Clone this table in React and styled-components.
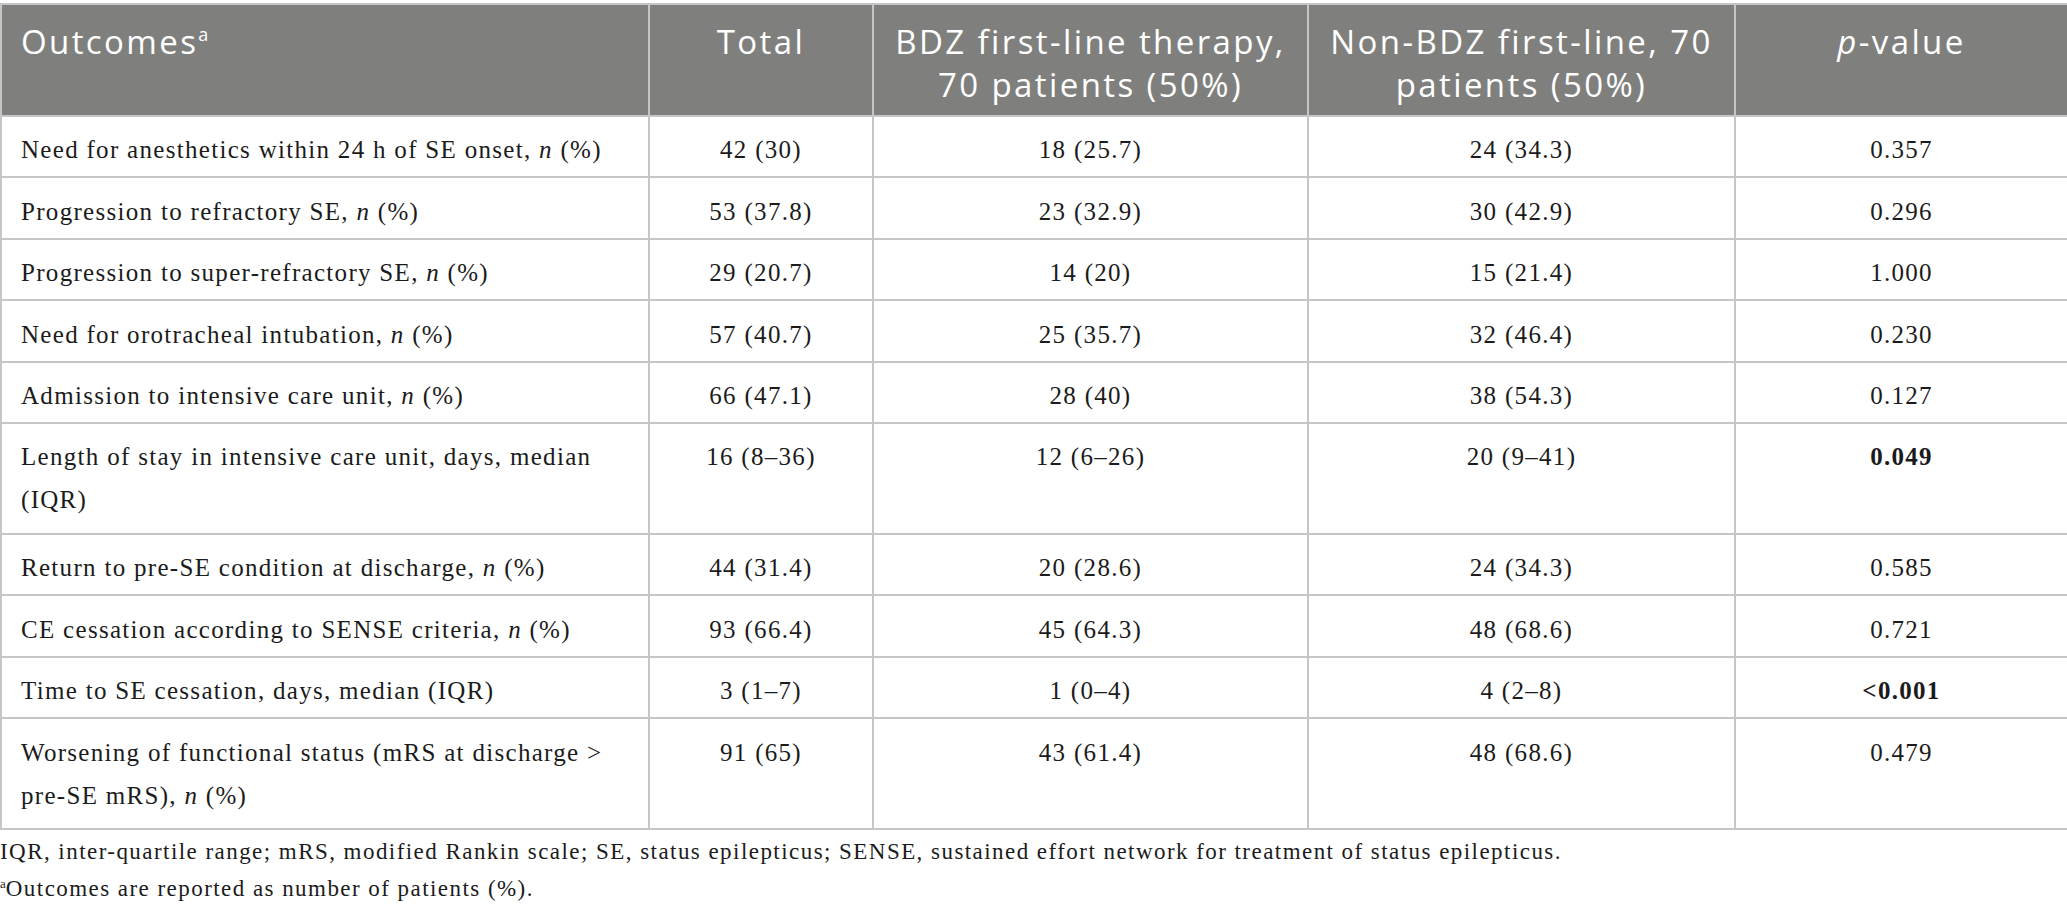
import React from 'react';
import styled, { createGlobalStyle } from 'styled-components';

const GlobalStyle = createGlobalStyle`
  html, body {
    margin: 0;
    padding: 0;
    background: #ffffff;
    overflow: hidden;
  }
`;

const Page = styled.div`
  width: 2067px;
  padding-top: 3px;
  font-family: 'Liberation Serif', 'Times New Roman', serif;
  color: #1b1b1b;
`;

const Table = styled.table`
  width: 2067px;
  table-layout: fixed;
  border-collapse: collapse;
  border: 2px solid #c6c6c6;
`;

const HeadCell = styled.th`
  height: 112px;
  box-sizing: border-box;
  padding: 15px 4px 0;
  vertical-align: top;
  background: #7f807e;
  border: 2px solid #c6c6c6;
  color: #ffffff;
  font-family: 'Open Sans', 'Noto Sans', sans-serif;
  font-weight: 400;
  font-size: 33px;
  line-height: 43px;
  letter-spacing: 2.4px;
  white-space: nowrap;
  text-align: ${(p) => (p.$left ? 'left' : 'center')};
  padding-left: ${(p) => (p.$left ? '19px' : '4px')};

  sup {
    font-size: 18px;
    line-height: 0;
    letter-spacing: 0;
    vertical-align: 13px;
  }
`;

const Row = styled.tr`
  td {
    padding-bottom: ${(p) => (p.$tall ? '11.6px' : '5px')};
  }
`;

const Cell = styled.td`
  padding: 11.4px 10px 5px;
  vertical-align: top;
  border: 2px solid #c6c6c6;
  font-size: 25px;
  line-height: 43px;
  letter-spacing: 1.3px;
  white-space: nowrap;
  text-align: ${(p) => (p.$left ? 'left' : 'center')};
  padding-left: ${(p) => (p.$left ? '19px' : '10px')};
  font-weight: ${(p) => (p.$bold ? 700 : 400)};
`;

const Notes = styled.div`
  margin-top: 3px;
  font-size: 23px;
  line-height: 37px;
  letter-spacing: 1.45px;

  sup {
    font-size: 13px;
    line-height: 0;
    letter-spacing: 0;
    vertical-align: 8px;
  }
`;

const N = () => <i>n</i>;

const rows = [
  { label: <>Need for anesthetics within 24 h of SE onset, <N /> (%)</>, total: '42 (30)', bdz: '18 (25.7)', non: '24 (34.3)', p: '0.357' },
  { label: <>Progression to refractory SE, <N /> (%)</>, total: '53 (37.8)', bdz: '23 (32.9)', non: '30 (42.9)', p: '0.296' },
  { label: <>Progression to super-refractory SE, <N /> (%)</>, total: '29 (20.7)', bdz: '14 (20)', non: '15 (21.4)', p: '1.000' },
  { label: <>Need for orotracheal intubation, <N /> (%)</>, total: '57 (40.7)', bdz: '25 (35.7)', non: '32 (46.4)', p: '0.230' },
  { label: <>Admission to intensive care unit, <N /> (%)</>, total: '66 (47.1)', bdz: '28 (40)', non: '38 (54.3)', p: '0.127' },
  {
    label: <>Length of stay in intensive care unit, days, median<br />(IQR)</>,
    total: '16 (8–36)', bdz: '12 (6–26)', non: '20 (9–41)', p: '0.049', bold: true, tall: true,
  },
  { label: <>Return to pre-SE condition at discharge, <N /> (%)</>, total: '44 (31.4)', bdz: '20 (28.6)', non: '24 (34.3)', p: '0.585' },
  { label: <>CE cessation according to SENSE criteria, <N /> (%)</>, total: '93 (66.4)', bdz: '45 (64.3)', non: '48 (68.6)', p: '0.721' },
  { label: <>Time to SE cessation, days, median (IQR)</>, total: '3 (1–7)', bdz: '1 (0–4)', non: '4 (2–8)', p: '<0.001', bold: true },
  {
    label: <>Worsening of functional status (mRS at discharge &gt;<br />pre-SE mRS), <N /> (%)</>,
    total: '91 (65)', bdz: '43 (61.4)', non: '48 (68.6)', p: '0.479', tall: true,
  },
];

const App = () => {
  return (
    <>
      <GlobalStyle />
      <Page>
        <Table>
          <colgroup>
            <col style={{ width: 648 }} />
            <col style={{ width: 224 }} />
            <col style={{ width: 435 }} />
            <col style={{ width: 427 }} />
            <col style={{ width: 333 }} />
          </colgroup>
          <thead>
            <tr>
              <HeadCell $left>
                Outcomes<sup>a</sup>
              </HeadCell>
              <HeadCell>Total</HeadCell>
              <HeadCell>
                BDZ first-line therapy,
                <br />
                70 patients (50%)
              </HeadCell>
              <HeadCell>
                Non-BDZ first-line, 70
                <br />
                patients (50%)
              </HeadCell>
              <HeadCell>
                <i>p</i>-value
              </HeadCell>
            </tr>
          </thead>
          <tbody>
            {rows.map((r, i) => (
              <Row key={i} $tall={r.tall}>
                <Cell $left>{r.label}</Cell>
                <Cell>{r.total}</Cell>
                <Cell>{r.bdz}</Cell>
                <Cell>{r.non}</Cell>
                <Cell $bold={r.bold}>{r.p}</Cell>
              </Row>
            ))}
          </tbody>
        </Table>
        <Notes>
          <div>
            IQR, inter-quartile range; mRS, modified Rankin scale; SE, status epilepticus; SENSE, sustained effort network
            for treatment of status epilepticus.
          </div>
          <div>
            <sup>a</sup>Outcomes are reported as number of patients (%).
          </div>
        </Notes>
      </Page>
    </>
  );
};

export default App;
